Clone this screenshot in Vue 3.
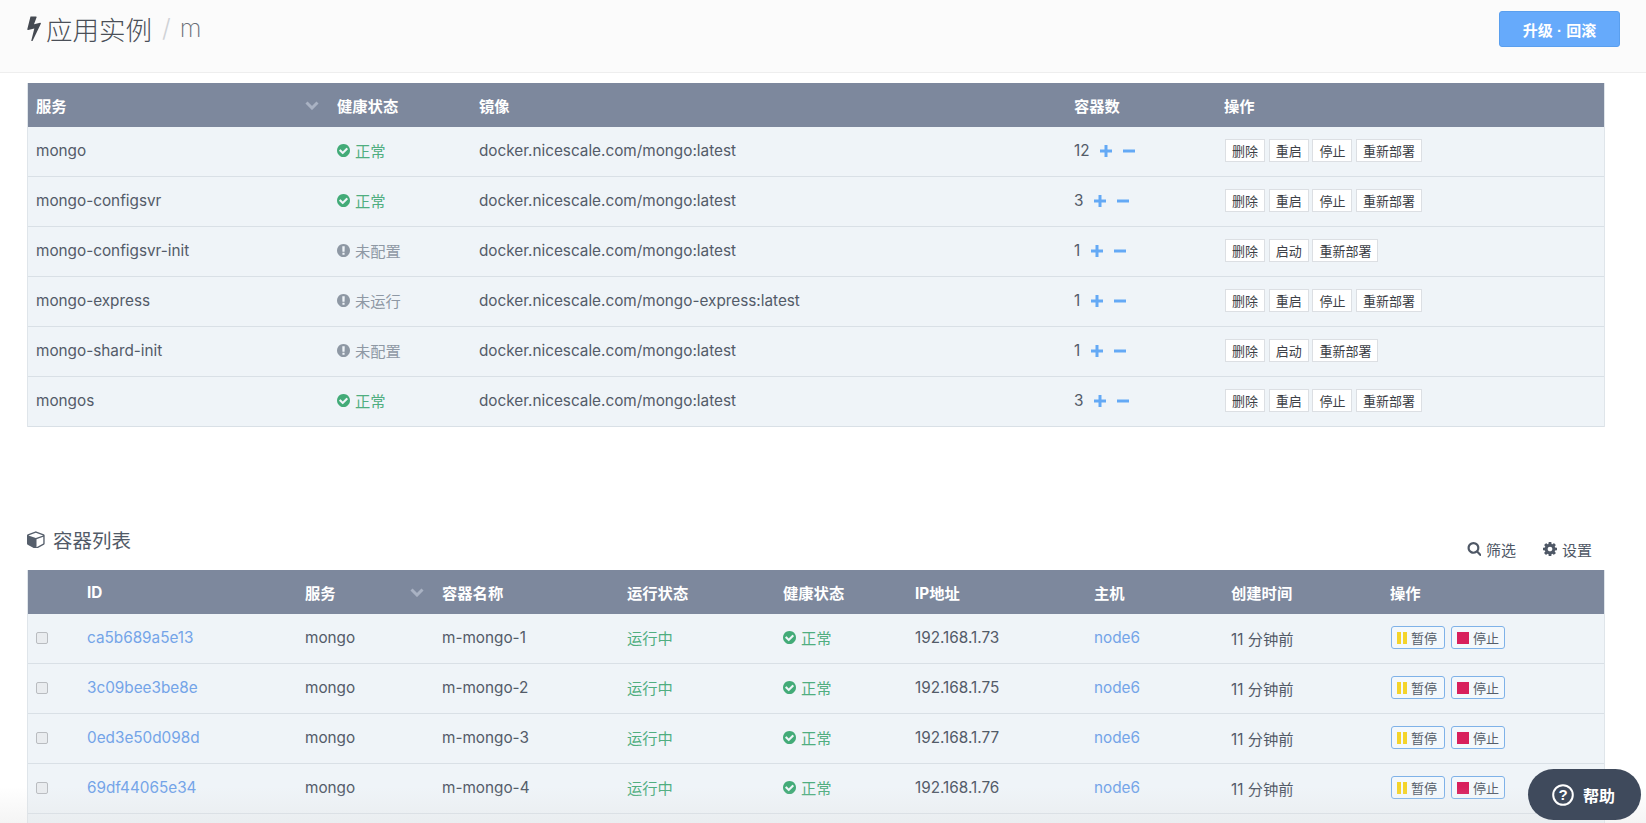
<script setup>
const p = {
  check: 'M1412 734q0-28-18-46l-91-90q-19-19-45-19t-45 19l-408 407-226-226q-19-19-45-19t-45 19l-91 90q-18 18-18 46 0 27 18 45l362 362q19 19 45 19 27 0 46-19l543-543q18-18 18-45zm252 162q0 209-103 385.5t-279.5 279.5-385.5 103-385.5-103-279.5-279.5-103-385.5 103-385.5 279.5-279.5 385.5-103 385.5 103 279.5 279.5 103 385.5z',
  warn: 'M896 128q209 0 385.5 103t279.5 279.5 103 385.5-103 385.5-279.5 279.5-385.5 103-385.5-103-279.5-279.5-103-385.5 103-385.5 279.5-279.5 385.5-103zm128 1247v-190q0-14-9-23.5t-22-9.5h-192q-13 0-23 10t-10 23v190q0 13 10 23t23 10h192q13 0 22-9.5t9-23.5zm-2-344l18-621q0-12-10-18-10-8-24-8h-220q-14 0-24 8-10 6-10 18l17 621q0 10 10 17.5t24 7.5h185q14 0 23.5-7.5t10.5-17.5z',
  bolt: 'M1333 566q18 20 7 44l-540 1157q-13 25-42 25-4 0-14-2-17-5-25.5-19t-4.5-30l197-808-406 101q-4 1-12 1-18 0-31-11-18-15-13-39l201-825q4-14 16-23t28-9h328q19 0 32 12.5t13 29.5q0 8-5 18l-171 463 396-98q8-2 12-2 19 0 34 15z',
  cube: 'M896 1629l640-349v-636l-640 233v752zm-64-865l698-254-698-254-698 254zm832-252v768q0 35-18 65t-49 47l-704 384q-28 16-61 16t-61-16l-704-384q-31-17-49-47t-18-65v-768q0-40 23-73t61-47l704-256q22-8 44-8t44 8l704 256q38 14 61 47t23 73z',
  search: 'M1216 832q0-185-131.5-316.5t-316.5-131.5-316.5 131.5-131.5 316.5 131.5 316.5 316.5 131.5 316.5-131.5 131.5-316.5zm512 832q0 52-38 90t-90 38q-54 0-90-38l-343-342q-179 124-399 124-143 0-273.5-55.5t-225-150-150-225-55.5-273.5 55.5-273.5 150-225 225-150 273.5-55.5 273.5 55.5 225 150 150 225 55.5 273.5q0 220-124 399l343 343q37 37 37 90z',
  cog: 'M1152 896q0-106-75-181t-181-75-181 75-75 181 75 181 181 75 181-75 75-181zm512-109v222q0 12-8 23t-20 13l-185 28q-19 54-39 91 35 50 107 138 10 12 10 25t-9 23q-27 37-99 108t-94 71q-12 0-26-9l-138-108q-44 23-91 38-16 136-29 186-7 28-36 28h-222q-14 0-24.5-8.5t-11.5-21.5l-28-184q-49-16-90-37l-141 107q-10 9-25 9-14 0-25-11-126-114-165-168-7-10-7-23 0-12 8-23 15-21 51-66.5t54-70.5q-27-50-41-99l-183-27q-13-2-21-12.5t-8-23.5v-222q0-12 8-23t19-13l186-28q14-46 39-92-40-57-107-138-10-12-10-24 0-10 9-23 26-36 98.5-107.5t94.5-71.5q13 0 26 10l138 107q44-23 91-38 16-136 29-186 7-28 36-28h222q14 0 24.5 8.5t11.5 21.5l28 184q49 16 90 37l142-107q9-9 24-9 13 0 25 10 129 119 165 170 7 8 7 22 0 12-8 23-15 21-51 66.5t-54 70.5q26 50 41 98l183 28q13 2 21 12.5t8 23.5z'
}
const img = 'docker.nicescale.com/mongo:latest'
const full = ['删除', '重启', '停止', '重新部署']
const idle = ['删除', '启动', '重新部署']
const services = [
  { name: 'mongo', ok: true, status: '正常', image: img, count: 12, ops: full },
  { name: 'mongo-configsvr', ok: true, status: '正常', image: img, count: 3, ops: full },
  { name: 'mongo-configsvr-init', ok: false, status: '未配置', image: img, count: 1, ops: idle },
  { name: 'mongo-express', ok: false, status: '未运行', image: 'docker.nicescale.com/mongo-express:latest', count: 1, ops: full },
  { name: 'mongo-shard-init', ok: false, status: '未配置', image: img, count: 1, ops: idle },
  { name: 'mongos', ok: true, status: '正常', image: img, count: 3, ops: full }
]
const containers = [
  { id: 'ca5b689a5e13', name: 'm-mongo-1', ip: '192.168.1.73' },
  { id: '3c09bee3be8e', name: 'm-mongo-2', ip: '192.168.1.75' },
  { id: '0ed3e50d098d', name: 'm-mongo-3', ip: '192.168.1.77' },
  { id: '69df44065e34', name: 'm-mongo-4', ip: '192.168.1.76' }
]
const svcCols = [301, 142, 595, 150, 388]
const ctrCols = [51, 218, 137, 185, 156, 132, 179, 137, 159, 222]
</script>

<template>
  <div class="page">
    <header class="topbar">
      <h1 class="title">
        <svg class="bolt" viewBox="430 96 920 1680" preserveAspectRatio="none"><path :d="p.bolt" /></svg>
        <span>应用实例</span><span class="slash">/</span><span class="sub">m</span>
      </h1>
      <button class="upgrade">升级 · 回滚</button>
    </header>

    <table class="grid first">
      <colgroup><col v-for="(w, i) in svcCols" :key="i" :style="{ width: w + 'px' }" /></colgroup>
      <thead>
        <tr>
          <th><div class="sort"><span>服务</span><svg class="chev" viewBox="0 0 14 9"><path d="M1.5 1.5 7 7l5.5-5.500" /></svg></div></th>
          <th>健康状态</th><th>镜像</th><th>容器数</th><th>操作</th>
        </tr>
      </thead>
      <tbody>
        <tr v-for="s in services" :key="s.name">
          <td>{{ s.name }}</td>
          <td>
            <span class="state" :class="s.ok ? 'ok' : 'off'">
              <svg class="ico" viewBox="128 128 1536 1536"><path :d="s.ok ? p.check : p.warn" /></svg>{{ s.status }}
            </span>
          </td>
          <td>{{ s.image }}</td>
          <td>
            <span class="count">{{ s.count }}
              <svg class="step" viewBox="0 0 12 12"><path d="M4.5 0h3v4.500h4.500v3h-4.500v4.500h-3v-4.500h-4.500v-3h4.500z" /></svg>
              <svg class="step minus" viewBox="0 0 12 12"><rect x="0" y="4.500" width="12" height="3" /></svg>
            </span>
          </td>
          <td><div class="ops"><button v-for="o in s.ops" :key="o" class="mini">{{ o }}</button></div></td>
        </tr>
      </tbody>
    </table>

    <div class="sectionhead">
      <h2 class="sectiontitle">
        <svg class="cube" viewBox="0 128 1792 1536"><path fill-rule="evenodd" :d="p.cube" /></svg>容器列表
      </h2>
      <div class="tools">
        <span class="tool"><svg class="toolico" viewBox="0 128 1664 1664"><path :d="p.search" /></svg>筛选</span>
        <span class="tool"><svg class="toolico" viewBox="128 128 1536 1536"><path :d="p.cog" /></svg>设置</span>
      </div>
    </div>

    <table class="grid second">
      <colgroup><col v-for="(w, i) in ctrCols" :key="i" :style="{ width: w + 'px' }" /></colgroup>
      <thead>
        <tr>
          <th></th><th>ID</th>
          <th><div class="sort"><span>服务</span><svg class="chev" viewBox="0 0 14 9"><path d="M1.5 1.5 7 7l5.5-5.500" /></svg></div></th>
          <th>容器名称</th><th>运行状态</th><th>健康状态</th><th>IP地址</th><th>主机</th><th>创建时间</th><th>操作</th>
        </tr>
      </thead>
      <tbody>
        <tr v-for="c in containers" :key="c.id">
          <td><input class="tick" type="checkbox" /></td>
          <td><a class="link">{{ c.id }}</a></td>
          <td>mongo</td>
          <td>{{ c.name }}</td>
          <td class="run">运行中</td>
          <td><span class="state ok"><svg class="ico" viewBox="128 128 1536 1536"><path :d="p.check" /></svg>正常</span></td>
          <td>{{ c.ip }}</td>
          <td><a class="link">node6</a></td>
          <td>11 分钟前</td>
          <td>
            <div class="ops wide">
              <button class="act"><span class="pause"><i></i><i></i></span>暂停</button>
              <button class="act"><span class="stop"></span>停止</button>
            </div>
          </td>
        </tr>
        <tr class="blank"><td colspan="10"></td></tr>
      </tbody>
    </table>

    <div class="fade"></div>
    <button class="help">
      <svg class="helpico" viewBox="0 0 22 22"><circle cx="11" cy="11" r="9.800" /></svg>
      <span class="q">?</span>
      <span>帮助</span>
    </button>
  </div>
</template>

<style>
html, body { margin: 0; height: 823px; overflow: hidden; background: #fff; }
</style>

<style scoped>
.page {
  position: relative;
  width: 1646px;
  height: 823px;
  overflow: hidden;
  font-family: Inter, "Noto Sans CJK SC", sans-serif;
  font-size: 15.3px;
  color: #535b68;
}
.topbar {
  height: 73px;
  box-sizing: border-box;
  padding: 11px 26px 0 27px;
  background: #fbfbfb;
  border-bottom: 1px solid #eeeeee;
  display: flex;
  justify-content: space-between;
  align-items: flex-start;
}
.title {
  margin: -1px 0 0;
  display: flex;
  align-items: center;
  height: 36px;
  font-size: 26.500px;
  font-weight: 300;
  color: #4a4f57;
}
.bolt { width: 14px; height: 25px; margin-right: 5px; fill: #454a52; }
.slash { margin: 0 9px 0 10px; color: #cfd2d6; font-size: 25px; }
.sub { color: #6b7078; font-size: 25px; font-weight: 200; }
.upgrade {
  width: 121px;
  height: 36px;
  border: 1px solid #5a9fee;
  border-radius: 3px;
  background: #66aafb;
  color: #fff;
  font: 700 15px "Liberation Sans", "Noto Sans CJK SC", sans-serif;
  padding: 0;
}
.grid {
  width: 1578px;
  margin-left: 27px;
  table-layout: fixed;
  border-collapse: separate;
  border-spacing: 0;
  border-right: 1px solid #dfe5ea;
  border-left: 1px solid #dfe5ea;
}
.first { margin-top: 10px; }
.grid th {
  height: 44px;
  padding: 0 8px;
  background: #7d889d;
  color: #fff;
  font-size: 15.300px;
  font-weight: 700;
  text-align: left;
}
.grid td {
  height: 50px;
  box-sizing: border-box;
  padding: 0 8px 2px;
  background: #eff4f8;
  border-bottom: 1px solid #d9e0e6;
  white-space: nowrap;
}
.sort { display: flex; align-items: center; justify-content: space-between; padding-right: 2px; }
.chev { width: 14px; height: 9px; fill: none; stroke: #a9b2c3; stroke-width: 3; }
.state { display: inline-flex; align-items: center; vertical-align: 1px; }
.ico { width: 13px; height: 13px; margin-right: 5px; }
.ok { color: #4fae80; }
.ok .ico { fill: #43ab78; }
.off { color: #8e98a4; }
.off .ico { fill: #8e98a4; }
.count { display: inline-flex; align-items: center; }
.step { width: 12px; height: 12px; margin-left: 10.500px; fill: #64a9f5; }
.step.minus { margin-left: 11px; }
.ops { display: flex; gap: 3.700px; margin-left: 1px; }
.ops.wide { gap: 6px; }
.mini {
  height: 23px;
  padding: 0 6px;
  border: 1px solid #dcdfe3;
  background: #fff;
  color: #3c4046;
  font: 13px "Noto Sans CJK SC", sans-serif;
  line-height: 21px;
}
.sectionhead {
  margin: 91px 0 0 27px;
  width: 1578px;
  height: 52px;
  display: flex;
  justify-content: space-between;
}
.sectiontitle {
  margin: -1px 0 0;
  height: 44px;
  display: flex;
  align-items: center;
  font-size: 19.500px;
  font-weight: 400;
  color: #515a67;
}
.cube { width: 19px; height: 17px; margin-right: 7px; fill: #565f6c; }
.tools { display: flex; gap: 27px; padding: 21px 13px 0 0; height: 20px; }
.tool { display: inline-flex; align-items: center; font-size: 15px; color: #4f5866; }
.toolico { width: 14px; height: 14px; margin-right: 5px; fill: #4f5866; }
.tick {
  appearance: none;
  display: block;
  width: 12px;
  height: 12px;
  margin: 0;
  border: 1px solid #b9bcc0;
  border-radius: 2px;
  background: #e9ecef;
}
.link { color: #74a4e8; }
.grid td.run { color: #4fae80; padding-bottom: 4px; }
.act {
  display: inline-flex;
  align-items: center;
  height: 23px;
  box-sizing: border-box;
  width: 54px;
  padding: 0 0 0 5px;
  border: 1px solid #7fb2e8;
  border-radius: 3px;
  background: #f3f8fc;
  color: #555d69;
  font: 13px "Noto Sans CJK SC", sans-serif;
}
.pause { display: inline-flex; gap: 2px; margin-right: 4px; }
.pause i { display: block; width: 4px; height: 12px; background: #f4d42b; }
.stop { width: 12px; height: 12px; margin-right: 4px; background: #d81f5c; }
.blank td { border-bottom: 0; }
.fade {
  position: absolute;
  left: 0;
  right: 0;
  bottom: 0;
  height: 36px;
  background: linear-gradient(rgba(225, 225, 225, 0), rgba(225, 225, 225, 0.35));
  pointer-events: none;
}
.help {
  position: absolute;
  left: 1528px;
  top: 769px;
  width: 113px;
  height: 51px;
  border: 0;
  border-radius: 26px;
  background: #3f4a5c;
  color: #fff;
  font: 700 16px "Noto Sans CJK SC", sans-serif;
  display: flex;
  align-items: center;
  padding: 0 0 0 24px;
}
.helpico { width: 22px; height: 22px; margin-right: 9px; fill: none; stroke: #fff; stroke-width: 2; }
.q {
  position: absolute;
  left: 24px;
  width: 22px;
  text-align: center;
  font: 700 15px "Liberation Sans", sans-serif;
}
</style>
